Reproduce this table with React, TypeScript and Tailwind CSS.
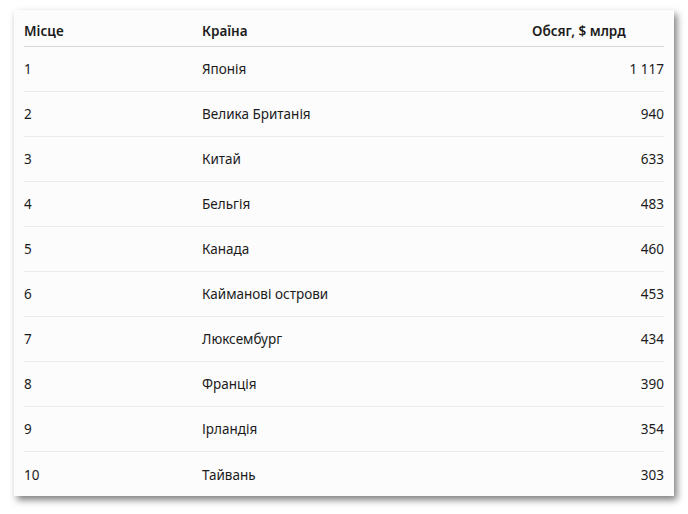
const rows: [number, string, string][] = [
  [1, "Японія", "1 117"],
  [2, "Велика Британія", "940"],
  [3, "Китай", "633"],
  [4, "Бельгія", "483"],
  [5, "Канада", "460"],
  [6, "Кайманові острови", "453"],
  [7, "Люксембург", "434"],
  [8, "Франція", "390"],
  [9, "Ірландія", "354"],
  [10, "Тайвань", "303"],
];

export default function App() {
  return (
    <div className="h-[514px] w-[688px] bg-white pl-[14px] pt-[10px] font-['Noto_Sans',sans-serif] text-[13.5px] text-[#1b1b1b]">
      <div className="w-[660px] bg-[#fcfcfc] px-[10px] pt-[2px] shadow-[3px_4px_7px_rgba(0,0,0,0.5)]">
        <table className="w-full border-collapse">
          <thead>
            <tr className="h-[34px] border-b border-[#d6d6d6] text-left">
              <th className="w-[178px] p-0 pt-[4px] font-semibold">Місце</th>
              <th className="w-[330px] p-0 pt-[4px] font-semibold">Країна</th>
              <th className="p-0 pt-[4px] font-semibold">Обсяг, $ млрд</th>
            </tr>
          </thead>
          <tbody>
            {rows.map(([n, country, value], i) => (
              <tr key={n} className={`h-[45px] ${i < rows.length - 1 ? "border-b border-[#ececec]" : ""}`}>
                <td className="p-0 pt-[2px]">{n}</td>
                <td className="p-0 pt-[2px]">{country}</td>
                <td className="p-0 pt-[2px] text-right">{value}</td>
              </tr>
            ))}
          </tbody>
        </table>
      </div>
    </div>
  );
}
